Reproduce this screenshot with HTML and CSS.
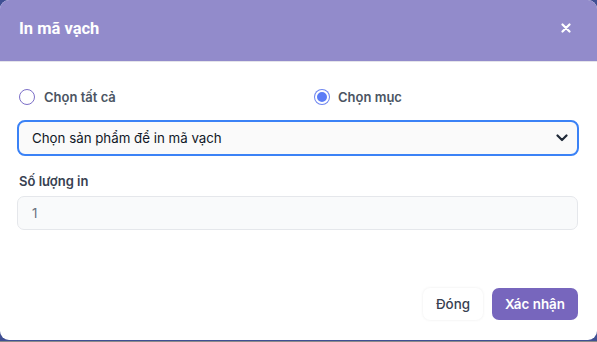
FILE: index.html
```html
<!DOCTYPE html>
<html lang="vi">
<head>
    <meta charset="UTF-8">
    <meta name="viewport" content="width=device-width, initial-scale=1.0">
    <title>In mã vạch</title>
    <link rel="stylesheet" href="styles.css">
</head>
<body>
    <div class="backdrop">
        <div class="modal">
            <div class="modal-header">
                <h2>In mã vạch</h2>
                <button class="close-btn" aria-label="Đóng">
                    <svg width="10" height="10" viewBox="0 0 10 10"><path d="M1.5 1.5L8.5 8.5M8.5 1.5L1.5 8.5" stroke="#fff" stroke-width="2.2" stroke-linecap="round"/></svg>
                </button>
            </div>

            <div class="modal-body">
                <div class="radio-row">
                    <label class="radio">
                        <span class="dot"></span>
                        Chọn tất cả
                    </label>
                    <label class="radio checked">
                        <span class="dot"></span>
                        Chọn mục
                    </label>
                </div>

                <div class="select">
                    <span>Chọn sản phẩm để in mã vạch</span>
                    <svg width="12" height="8" viewBox="0 0 12 8"><path d="M1.5 1.5L6 6L10.5 1.5" fill="none" stroke="#1f2937" stroke-width="2.2" stroke-linecap="round" stroke-linejoin="round"/></svg>
                </div>

                <p class="field-label">Số lượng in</p>
                <div class="input">1</div>
            </div>

            <div class="modal-footer">
                <button class="btn btn-light">Đóng</button>
                <button class="btn btn-primary">Xác nhận</button>
            </div>
        </div>
    </div>
</body>
</html>
```

FILE: styles.css
```css
html, body {
    margin: 0;
    padding: 0;
}
body {
    font-family: Inter, "Noto Sans", sans-serif;
    background: #8a8a8a;
    width: 597px;
    height: 342px;
    overflow: hidden;
}
.backdrop {
    background: #3f4f93;
    height: 341px;
}
.modal {
    background: #fff;
    height: 340px;
    border-radius: 9px;
    overflow: hidden;
    display: flex;
    flex-direction: column;
}
.modal-header {
    background: #928bcb;
    height: 62px;
    border-bottom: 1px solid #e4e4ea;
    display: flex;
    align-items: center;
    justify-content: space-between;
    padding: 0 26px 0 19px;
    box-sizing: border-box;
}
.modal-header h2 {
    margin: 0 0 4px;
    color: #fff;
    font-family: Roboto, sans-serif;
    font-size: 16.5px;
    font-weight: 700;
}
.close-btn {
    background: none;
    border: none;
    padding: 0;
    margin-bottom: 6px;
    display: flex;
}
.modal-body {
    padding: 25px 18px 0 17px;
    flex: 1;
}
.radio-row {
    display: grid;
    grid-template-columns: 295px 1fr;
    padding-left: 2px;
}
.radio {
    display: flex;
    align-items: center;
    gap: 9px;
    font-size: 13px;
    font-weight: 600;
    color: #4b5563;
    height: 20px;
}
.dot {
    width: 14px;
    height: 14px;
    border: 1px solid #7c6fc8;
    border-radius: 50%;
    box-sizing: content-box;
}
.radio.checked .dot {
    width: 10px;
    height: 10px;
    background: #5b7cf6;
    border: 2px solid #fff;
    box-shadow: 0 0 0 1px #6d85f0;
    margin-left: 1px;
}
.select {
    margin-top: 13px;
    height: 36px;
    border: 2px solid #3b82f6;
    border-radius: 8px;
    background: #fafafa;
    box-sizing: border-box;
    display: flex;
    align-items: center;
    justify-content: space-between;
    padding: 0 9px 0 13px;
    font-size: 13.3px;
    color: #111827;
}
.field-label {
    margin: 17px 0 7px 2px;
    font-size: 13px;
    font-weight: 600;
    color: #374151;
}
.input {
    height: 34px;
    border: 1px solid #e5e7eb;
    border-radius: 7px;
    background: #f9fafb;
    box-sizing: border-box;
    display: flex;
    align-items: center;
    padding-left: 14px;
    font-size: 13.3px;
    color: #6b7280;
    margin-right: 1px;
}
.modal-footer {
    display: flex;
    justify-content: flex-end;
    gap: 9px;
    padding: 0 19px 20px;
}
.btn {
    font-family: Inter, sans-serif;
    font-size: 13.4px;
    font-weight: 600;
    height: 32px;
    border: none;
    border-radius: 7px;
    padding: 0 13px;
}
.btn-light {
    background: #fff;
    color: #374151;
    box-shadow: 0 0 3px rgba(0, 0, 0, 0.08);
    font-weight: 500;
}
.btn-primary {
    background: #7766bd;
    color: #fff;
}
```
